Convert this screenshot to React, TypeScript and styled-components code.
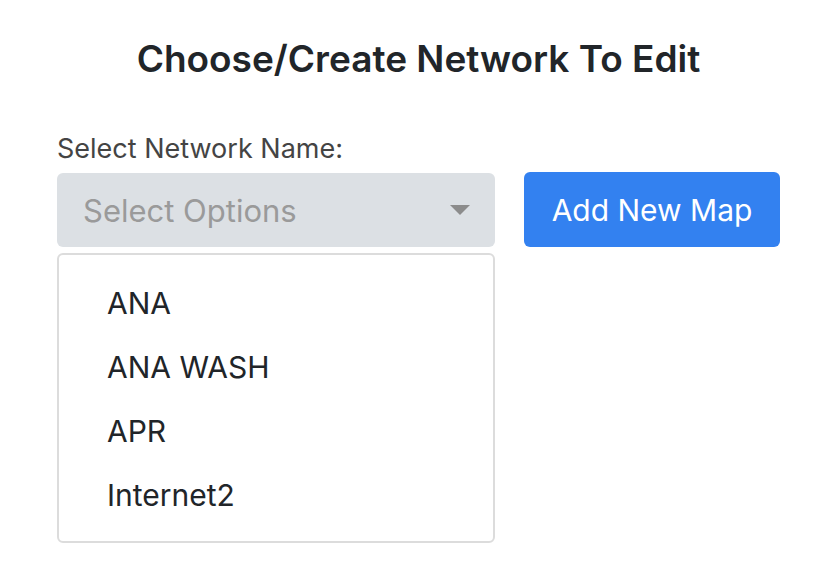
import React from "react";
import styled, { createGlobalStyle } from "styled-components";

const Global = createGlobalStyle`
  html, body { margin: 0; padding: 0; background: #fff; }
  body { font-family: Inter, "Liberation Sans", sans-serif; }
  * { box-sizing: border-box; }
`;

const Page = styled.div`
  width: 832px;
  height: 588px;
  padding: 37px 52px 0 57px;
`;

const Title = styled.h1`
  margin: 0;
  text-align: center;
  font-size: 37px;
  font-weight: 600;
  line-height: 44px;
  color: #212529;
`;

const Label = styled.div`
  margin-top: 50px;
  font-size: 27px;
  line-height: 36px;
  color: #444;
`;

const Row = styled.div`
  margin-top: 6px;
  display: flex;
  gap: 29px;
  align-items: flex-start;
`;

const Column = styled.div`
  width: 438px;
  display: flex;
  flex-direction: column;
  gap: 6px;
`;

const SelectBox = styled.div`
  height: 74px;
  border-radius: 6px;
  background: #dce0e4;
  display: flex;
  align-items: center;
  justify-content: space-between;
  padding: 0 25px 0 26px;
  font-size: 31px;
  color: #9a9a9a;
`;

const Caret = styled.span`
  width: 0;
  height: 0;
  border-left: 10px solid transparent;
  border-right: 10px solid transparent;
  border-top: 10px solid #8c8c8c;
`;

const Menu = styled.ul`
  list-style: none;
  margin: 0;
  height: 290px;
  padding: 16px 0 14px 48px;
  border: 2px solid #dcdcdc;
  border-radius: 6px;
  background: #fff;
`;

const Item = styled.li`
  font-size: 30px;
  line-height: 64px;
  color: #212529;
`;

const Button = styled.button`
  width: 256px;
  height: 75px;
  margin-top: -1px;
  border: none;
  border-radius: 6px;
  background: #3381f0;
  color: #fff;
  font-family: inherit;
  font-size: 30px;
  cursor: pointer;
`;

const options = ["ANA", "ANA WASH", "APR", "Internet2"];

export default function App() {
  return (
    <>
      <Global />
      <Page>
        <Title>Choose/Create Network To Edit</Title>
        <Label>Select Network Name:</Label>
        <Row>
          <Column>
            <SelectBox>
              <span>Select Options</span>
              <Caret />
            </SelectBox>
            <Menu>
              {options.map((o) => (
                <Item key={o}>{o}</Item>
              ))}
            </Menu>
          </Column>
          <Button>Add New Map</Button>
        </Row>
      </Page>
    </>
  );
}
